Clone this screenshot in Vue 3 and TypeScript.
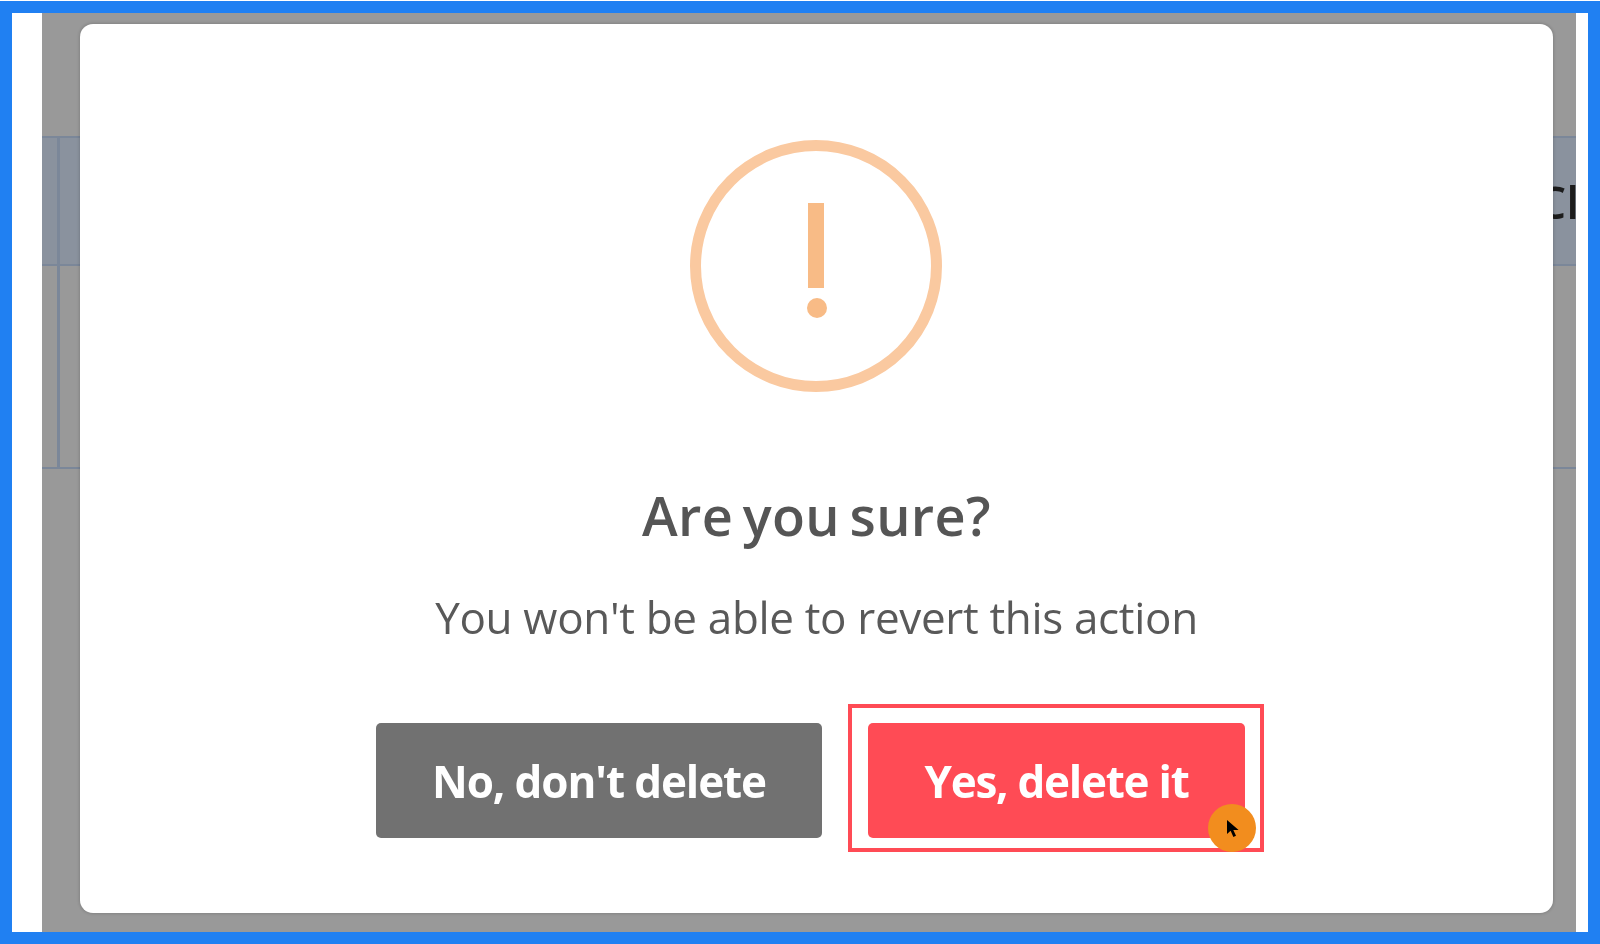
<template>
  <div class="frame">
    <div class="page">
      <div class="backdrop">
        <div class="table-row head">
          <div class="cell first"></div>
          <div class="cell rest"><span class="clipped">Cl</span></div>
        </div>
        <div class="table-row body-row">
          <div class="cell first"></div>
          <div class="cell rest"></div>
        </div>

        <div class="modal">
          <svg class="warn-icon" viewBox="0 0 252 254" width="252" height="254">
            <circle cx="126" cy="127" r="120.5" fill="none" stroke="#fac9a0" stroke-width="11" />
            <rect x="118" y="64" width="16" height="85" fill="#f8bb86" />
            <circle cx="127" cy="169" r="10" fill="#f8bb86" />
          </svg>
          <h2 class="title">{{ title }}</h2>
          <p class="message">{{ message }}</p>
          <div class="actions">
            <button class="btn cancel">{{ cancelLabel }}</button>
            <div class="confirm-wrap">
              <button class="btn confirm">{{ confirmLabel }}</button>
              <span class="highlight"></span>
              <span class="click-dot">
                <svg viewBox="0 0 14 18" width="14" height="18">
                  <path d="M1 0 L1 14 L4.6 10.8 L7.4 17 L10 15.8 L7.3 9.9 L12.6 9.9 Z" fill="#000" />
                </svg>
              </span>
            </div>
          </div>
        </div>
      </div>
    </div>
  </div>
</template>

<script setup lang="ts">
const title = "Are you sure?";
const message = "You won't be able to revert this action";
const cancelLabel = "No, don't delete";
const confirmLabel = "Yes, delete it";
</script>

<style>
html,
body {
  margin: 0;
  background: #fff;
}
</style>

<style scoped>
.frame {
  width: 1600px;
  height: 943px;
  margin-top: 1px;
  box-sizing: border-box;
  border: 12px solid #2080f2;
  font-family: "Open Sans", "Noto Sans", sans-serif;
  overflow: hidden;
}

.page {
  height: 100%;
  background: #fff;
  padding: 0 12px 0 30px;
  box-sizing: border-box;
}

.backdrop {
  position: relative;
  height: 100%;
  background: #999;
  padding-top: 123px;
  box-sizing: border-box;
  overflow: hidden;
}

.table-row {
  display: flex;
  border-bottom: 2px solid #7b8799;
}

.head {
  height: 130px;
  background: #8a929e;
  border-top: 2px solid #7b8799;
  box-sizing: border-box;
}

.body-row {
  height: 203px;
  box-sizing: border-box;
}

.cell.first {
  width: 15px;
  border-right: 3px solid #7b8799;
}

.cell.rest {
  flex: 1;
  display: flex;
  align-items: center;
  justify-content: flex-end;
}

.clipped {
  font-size: 46px;
  font-weight: 600;
  color: #1c1c1c;
  line-height: 1;
  margin-right: -3px;
  filter: blur(0.6px);
}

.modal {
  position: absolute;
  left: 38px;
  top: 11px;
  width: 1473px;
  height: 889px;
  box-sizing: border-box;
  padding-top: 115px;
  background: #fff;
  border-radius: 13px;
  box-shadow: 0 0 3px 1px rgba(0, 0, 0, 0.14);
  display: flex;
  flex-direction: column;
  align-items: center;
}

.warn-icon {
  display: block;
  flex: none;
  margin-right: 2px;
}

.title {
  margin: 88px 0 0;
  font-size: 54px;
  line-height: 68px;
  font-weight: 600;
  color: #555;
  letter-spacing: 0.4px;
  word-spacing: -5px;
  filter: blur(0.4px);
}

.message {
  margin: 39px 0 0;
  font-size: 44px;
  line-height: 58px;
  font-weight: 400;
  color: #595959;
  letter-spacing: -0.33px;
  filter: blur(0.4px);
}

.actions {
  display: flex;
  gap: 46px;
  margin-top: 77px;
  margin-right: 12px;
}

.btn {
  height: 115px;
  border: none;
  border-radius: 5px;
  color: #fff;
  font-family: inherit;
  font-size: 44px;
  font-weight: 700;
  letter-spacing: -1.1px;
  padding: 0;
  filter: blur(0.4px);
}

.cancel {
  width: 446px;
  background: #717171;
}

.confirm {
  width: 377px;
  background: #ff4b55;
  display: block;
  letter-spacing: -1.25px;
}

.confirm-wrap {
  position: relative;
}

.highlight {
  position: absolute;
  left: -20px;
  top: -19px;
  right: -19px;
  bottom: -14px;
  border: 4px solid #ff4b55;
  pointer-events: none;
}

.click-dot {
  position: absolute;
  left: 340px;
  top: 81px;
  width: 48px;
  height: 48px;
  border-radius: 50%;
  background: #f28d1e;
  display: flex;
  align-items: center;
  justify-content: center;
}

.click-dot svg {
  display: block;
  margin-left: 2px;
  margin-top: 1px;
}
</style>
